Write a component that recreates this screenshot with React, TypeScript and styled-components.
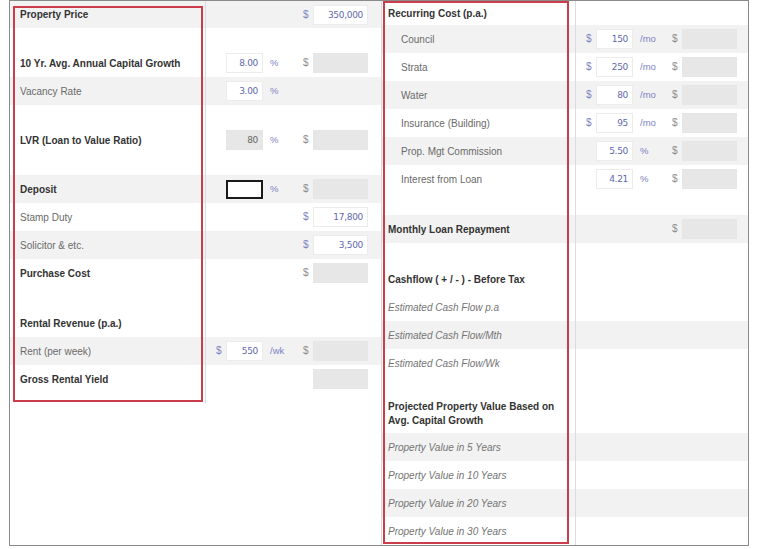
import React from "react";
import styled, { createGlobalStyle } from "styled-components";

const Global = createGlobalStyle`
  html, body { margin: 0; padding: 0; background: #ffffff; }
  body { font-family: "Liberation Sans", Arial, sans-serif; }
`;

const Page = styled.div`
  padding-left: 9px;
  width: 768px;
  height: 549px;
  box-sizing: border-box;
`;

const Frame = styled.div`
  position: relative;
  width: 740px;
  height: 546px;
  box-sizing: border-box;
  border: 1px solid #8a8a8a;
  display: grid;
  grid-template-columns: 372px 366px;
`;

const Half = styled.div<{ $divider?: boolean }>`
  display: flex;
  flex-direction: column;
  box-sizing: border-box;
  border-right: ${(p) => (p.$divider ? "1px solid #d9d9d9" : "none")};
`;

const Row = styled.div<{ $shade?: boolean; $h: number; $labelW: number }>`
  display: grid;
  grid-template-columns: ${(p) => p.$labelW}px 1fr;
  height: ${(p) => p.$h}px;
  background: ${(p) => (p.$shade ? "#f2f2f2" : "transparent")};
`;

const Label = styled.div<{ $kind?: "bold" | "plain" | "sub" | "italic"; $pad: number }>`
  display: flex;
  align-items: center;
  box-sizing: border-box;
  border-right: 1px solid #dcdcdc;
  padding-left: ${(p) => (p.$kind === "sub" ? p.$pad + 13 : p.$pad)}px;
  padding-top: 1px;
  font-size: 10px;
  line-height: 14px;
  font-weight: ${(p) => (p.$kind === "bold" ? 700 : 400)};
  font-style: ${(p) => (p.$kind === "italic" ? "italic" : "normal")};
  color: ${(p) => (p.$kind === "bold" ? "#333333" : p.$kind === "italic" ? "#747474" : "#6a6a6a")};
`;

const Values = styled.div<{ $padR: number }>`
  display: grid;
  grid-template-columns: 20px 37px 1fr 10px 55px;
  align-items: center;
  padding-right: ${(p) => p.$padR}px;
  font-size: 10px;
  line-height: 12px;
`;

const Slot = styled.div`
  display: flex;
  align-items: center;
  height: 20px;
`;

const Sym = styled.span<{ $muted?: boolean; $pad?: number }>`
  font-size: 10px;
  line-height: 12px;
  color: ${(p) => (p.$muted ? "#8c8c8c" : "#7b83c2")};
  padding-left: ${(p) => p.$pad ?? 0}px;
  white-space: nowrap;
`;

const Unit = styled.span`
  font-size: 9.5px;
  line-height: 12px;
  color: #7b83c2;
  padding-left: 7px;
  white-space: nowrap;
`;

const Field = styled.div<{ $kind: "edit" | "read" | "focus" | "locked" }>`
  box-sizing: border-box;
  height: ${(p) => (p.$kind === "focus" ? 19 : 20)}px;
  border: ${(p) =>
    p.$kind === "focus"
      ? "2px solid #1a1a1a"
      : p.$kind === "edit"
      ? "1px solid #ececec"
      : "1px solid #e6e6e6"};
  background: ${(p) => (p.$kind === "edit" || p.$kind === "focus" ? "#ffffff" : "#e7e7e7")};
  color: ${(p) => (p.$kind === "locked" ? "#666666" : "#5f68ad")};
  font-size: 9px;
  line-height: 18px;
  text-align: right;
  padding-right: 4px;
  font-family: "DejaVu Sans", "Liberation Sans", sans-serif;
  letter-spacing: -0.3px;
`;

const Spacer = styled.div<{ $h: number; $labelW: number }>`
  display: grid;
  grid-template-columns: ${(p) => p.$labelW}px 1fr;
  height: ${(p) => p.$h}px;
`;

const SpacerCell = styled.div`
  border-right: 1px solid #dcdcdc;
`;

const Annotation = styled.div<{ $l: number; $t: number; $w: number; $h: number }>`
  position: absolute;
  left: ${(p) => p.$l}px;
  top: ${(p) => p.$t}px;
  width: ${(p) => p.$w}px;
  height: ${(p) => p.$h}px;
  box-sizing: border-box;
  border: 2px solid #cc3d4b;
  pointer-events: none;
`;

type FieldKind = "edit" | "read" | "focus" | "locked";
type ValProps = {
  pre?: boolean;
  small?: { v: string; k: FieldKind };
  unit?: string;
  dollar?: "blue" | "gray";
  big?: { v: string; k: FieldKind };
};

type Item =
  | { type: "gap"; h: number }
  | {
      type: "row";
      label: React.ReactNode;
      kind: "bold" | "plain" | "sub" | "italic";
      h: number;
      shade?: boolean;
      val?: ValProps;
    };

const ValueCell: React.FC<{ v?: ValProps; padR: number }> = ({ v, padR }) => (
  <Values $padR={padR}>
    <Slot>{v?.pre ? <Sym $pad={10}>$</Sym> : null}</Slot>
    {v?.small ? <Field $kind={v.small.k}>{v.small.v}</Field> : <Slot />}
    <Slot>{v?.unit ? <Unit>{v.unit}</Unit> : null}</Slot>
    <Slot>{v?.dollar ? <Sym $muted={v.dollar === "gray"}>$</Sym> : null}</Slot>
    {v?.big ? <Field $kind={v.big.k}>{v.big.v}</Field> : <Slot />}
  </Values>
);

const Table: React.FC<{ items: Item[]; labelW: number; pad: number; padR: number }> = ({
  items,
  labelW,
  pad,
  padR,
}) => (
  <>
    {items.map((it, i) =>
      it.type === "gap" ? (
        <Spacer key={i} $h={it.h} $labelW={labelW}>
          <SpacerCell />
          <div />
        </Spacer>
      ) : (
        <Row key={i} $h={it.h} $shade={it.shade} $labelW={labelW}>
          <Label $kind={it.kind} $pad={pad}>
            {it.label}
          </Label>
          <ValueCell v={it.val} padR={padR} />
        </Row>
      )
    )}
  </>
);

const leftItems: Item[] = [
  { type: "row", label: "Property Price", kind: "bold", h: 27, shade: true, val: { dollar: "blue", big: { v: "350,000", k: "edit" } } },
  { type: "gap", h: 21 },
  { type: "row", label: "10 Yr. Avg. Annual Capital Growth", kind: "bold", h: 28, val: { small: { v: "8.00", k: "edit" }, unit: "%", dollar: "gray", big: { v: "", k: "read" } } },
  { type: "row", label: "Vacancy Rate", kind: "plain", h: 28, shade: true, val: { small: { v: "3.00", k: "edit" }, unit: "%" } },
  { type: "gap", h: 21 },
  { type: "row", label: "LVR (Loan to Value Ratio)", kind: "bold", h: 28, val: { small: { v: "80", k: "locked" }, unit: "%", dollar: "gray", big: { v: "", k: "read" } } },
  { type: "gap", h: 21 },
  { type: "row", label: "Deposit", kind: "bold", h: 28, shade: true, val: { small: { v: "", k: "focus" }, unit: "%", dollar: "gray", big: { v: "", k: "read" } } },
  { type: "row", label: "Stamp Duty", kind: "plain", h: 28, val: { dollar: "blue", big: { v: "17,800", k: "edit" } } },
  { type: "row", label: "Solicitor & etc.", kind: "plain", h: 28, shade: true, val: { dollar: "blue", big: { v: "3,500", k: "edit" } } },
  { type: "row", label: "Purchase Cost", kind: "bold", h: 28, val: { dollar: "gray", big: { v: "", k: "read" } } },
  { type: "gap", h: 22 },
  { type: "row", label: "Rental Revenue (p.a.)", kind: "bold", h: 28 },
  { type: "row", label: "Rent (per week)", kind: "plain", h: 28, shade: true, val: { pre: true, small: { v: "550", k: "edit" }, unit: "/wk", dollar: "gray", big: { v: "", k: "read" } } },
  { type: "row", label: "Gross Rental Yield", kind: "bold", h: 28, val: { big: { v: "", k: "read" } } },
  { type: "gap", h: 10 },
];

const mo = (v: string): ValProps => ({ pre: true, small: { v, k: "edit" }, unit: "/mo", dollar: "gray", big: { v: "", k: "read" } });

const rightItems: Item[] = [
  { type: "row", label: "Recurring Cost (p.a.)", kind: "bold", h: 24 },
  { type: "row", label: "Council", kind: "sub", h: 28, shade: true, val: mo("150") },
  { type: "row", label: "Strata", kind: "sub", h: 28, val: mo("250") },
  { type: "row", label: "Water", kind: "sub", h: 28, shade: true, val: mo("80") },
  { type: "row", label: "Insurance (Building)", kind: "sub", h: 28, val: mo("95") },
  { type: "row", label: "Prop. Mgt Commission", kind: "sub", h: 28, shade: true, val: { small: { v: "5.50", k: "edit" }, unit: "%", dollar: "gray", big: { v: "", k: "read" } } },
  { type: "row", label: "Interest from Loan", kind: "sub", h: 28, val: { small: { v: "4.21", k: "edit" }, unit: "%", dollar: "gray", big: { v: "", k: "read" } } },
  { type: "gap", h: 22 },
  { type: "row", label: "Monthly Loan Repayment", kind: "bold", h: 28, shade: true, val: { dollar: "gray", big: { v: "", k: "read" } } },
  { type: "gap", h: 22 },
  { type: "row", label: "Cashflow ( + / - ) - Before Tax", kind: "bold", h: 28 },
  { type: "row", label: "Estimated Cash Flow p.a", kind: "italic", h: 28 },
  { type: "row", label: "Estimated Cash Flow/Mth", kind: "italic", h: 28, shade: true },
  { type: "row", label: "Estimated Cash Flow/Wk", kind: "italic", h: 28 },
  { type: "gap", h: 16 },
  { type: "row", label: <span>Projected Property Value Based on<br />Avg. Capital Growth</span>, kind: "bold", h: 40 },
  { type: "row", label: "Property Value in 5 Years", kind: "italic", h: 28, shade: true },
  { type: "row", label: "Property Value in 10 Years", kind: "italic", h: 28 },
  { type: "row", label: "Property Value in 20 Years", kind: "italic", h: 28, shade: true },
  { type: "row", label: "Property Value in 30 Years", kind: "italic", h: 28 },
];

export default function App() {
  return (
    <Page>
      <Global />
      <Frame>
        <Half $divider>
          <Table items={leftItems} labelW={196} pad={10} padR={13} />
        </Half>
        <Half>
          <Table items={rightItems} labelW={194} pad={6} padR={11} />
        </Half>
        <Annotation $l={3} $t={5} $w={190} $h={396} />
        <Annotation $l={373} $t={0} $w={186} $h={543} />
      </Frame>
    </Page>
  );
}
